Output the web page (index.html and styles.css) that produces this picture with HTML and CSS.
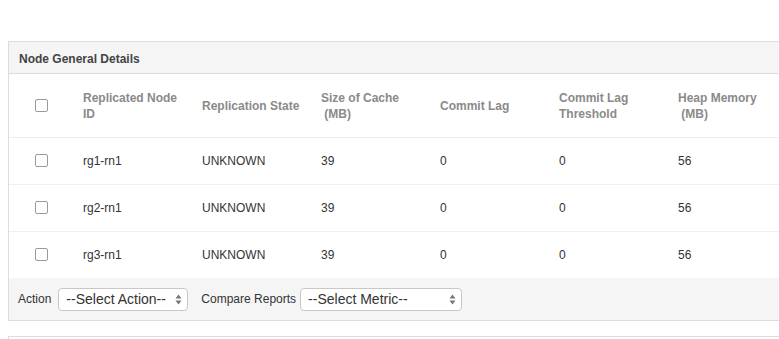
FILE: index.html
```html
<!DOCTYPE html>
<html>
<head>
<meta charset="utf-8">
<link rel="stylesheet" href="styles.css">
</head>
<body>
<div class="panel">
  <div class="panel-heading">Node General Details</div>
  <table class="grid">
    <colgroup>
      <col class="c-check"><col class="c-data"><col class="c-data"><col class="c-data"><col class="c-data"><col class="c-data"><col class="c-data">
    </colgroup>
    <thead>
      <tr>
        <th class="chk"><span class="box"></span></th>
        <th>Replicated Node<br>ID</th>
        <th>Replication State</th>
        <th>Size of Cache<br>&nbsp;(MB)</th>
        <th>Commit Lag</th>
        <th>Commit Lag<br>Threshold</th>
        <th>Heap Memory<br>&nbsp;(MB)</th>
      </tr>
    </thead>
    <tbody>
      <tr><td class="chk"><span class="box"></span></td><td>rg1-rn1</td><td>UNKNOWN</td><td>39</td><td>0</td><td>0</td><td>56</td></tr>
      <tr><td class="chk"><span class="box"></span></td><td>rg2-rn1</td><td>UNKNOWN</td><td>39</td><td>0</td><td>0</td><td>56</td></tr>
      <tr><td class="chk"><span class="box"></span></td><td>rg3-rn1</td><td>UNKNOWN</td><td>39</td><td>0</td><td>0</td><td>56</td></tr>
    </tbody>
  </table>
  <div class="panel-footer">
    <span class="lbl">Action</span>
    <div class="sel sel-action"><span>--Select Action--</span><svg class="arr" width="7" height="11" viewBox="0 0 7 11"><path d="M3.5 0.5 L6.5 4.5 H0.5 Z M3.5 10.5 L6.5 6.5 H0.5 Z" fill="#777"/></svg></div>
    <span class="lbl lbl2">Compare Reports</span>
    <div class="sel sel-metric"><span>--Select Metric--</span><svg class="arr" width="7" height="11" viewBox="0 0 7 11"><path d="M3.5 0.5 L6.5 4.5 H0.5 Z M3.5 10.5 L6.5 6.5 H0.5 Z" fill="#777"/></svg></div>
  </div>
</div>
<div class="panel panel-next"></div>
</body>
</html>
```
FILE: styles.css
```css
html, body {
  margin: 0;
  padding: 0;
  background: #fff;
  overflow: hidden;
}
body {
  font-family: "Liberation Sans", Arial, sans-serif;
  font-size: 12px;
  color: #333;
  padding: 41px 0 0 8px;
}
.panel {
  width: 840px;
  border: 1px solid #ddd;
  border-right: none;
  background: #fff;
}
.panel-heading {
  height: 32px;
  box-sizing: border-box;
  padding: 9px 10px 0 10px;
  background: #f5f5f5;
  border-bottom: 1px solid #ddd;
  font-weight: bold;
  color: #444;
  line-height: 16px;
}
.grid {
  border-collapse: collapse;
  table-layout: fixed;
  width: 780px;
}
.c-check { width: 66px; }
.c-data { width: 119px; }
.grid th {
  height: 63px;
  box-sizing: border-box;
  text-align: left;
  vertical-align: middle;
  font-weight: bold;
  color: #8a8a8a;
  line-height: 16px;
  padding: 2px 8px 0 8px;
  border-bottom: 1px solid #eee;
  white-space: nowrap;
}
.grid td {
  height: 47px;
  box-sizing: border-box;
  vertical-align: middle;
  padding: 0 8px;
  line-height: 16px;
  border-bottom: 1px solid #eee;
  color: #333;
}
.grid tbody tr:last-child td {
  border-bottom: none;
}
.grid .chk {
  padding: 0 0 0 26px;
}
.box {
  display: block;
  width: 11px;
  height: 11px;
  border: 1px solid #9a9a9a;
  border-radius: 2px;
  background: #fff;
}
.panel-footer {
  height: 42px;
  box-sizing: border-box;
  background: #f5f5f5;
  display: flex;
  align-items: center;
  padding: 0 0 0 9px;
}
.lbl {
  color: #333;
  margin-right: 7px;
}
.lbl2 {
  margin-left: 13px;
  margin-right: 4px;
}
.sel {
  position: relative;
  height: 23px;
  box-sizing: border-box;
  border: 1px solid #c8c8c8;
  border-radius: 4px;
  background: #fff;
  font-size: 14px;
  color: #333;
  display: flex;
  align-items: center;
  padding-left: 7px;
}
.sel-action { width: 130px; }
.sel-metric { width: 162px; }
.arr {
  position: absolute;
  right: 5px;
  top: 5px;
}
.panel-next {
  margin-top: 15px;
  height: 10px;
  border-bottom: none;
}
```
